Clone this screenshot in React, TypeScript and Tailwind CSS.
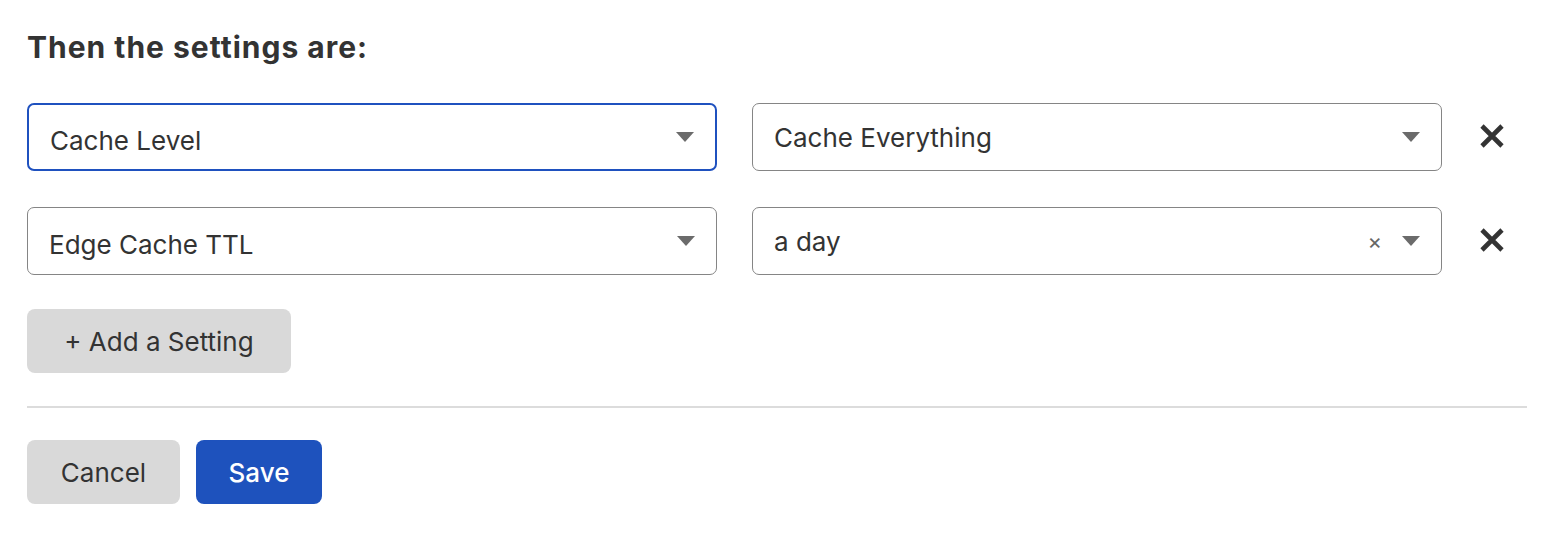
function Caret() {
  return (
    <svg width="18" height="10" viewBox="0 0 18 10" className="shrink-0">
      <path d="M0 0h18L9 10z" fill="#6b6b6b" />
    </svg>
  );
}

function RemoveIcon() {
  return (
    <svg width="26" height="26" viewBox="0 0 26 26">
      <path d="M3 3L23 23M23 3L3 23" stroke="#333" strokeWidth="4.6" strokeLinecap="butt" />
    </svg>
  );
}

function Select({
  value,
  focused,
  clearable,
  offset,
}: {
  value: string;
  focused?: boolean;
  clearable?: boolean;
  offset?: boolean;
}) {
  return (
    <div
      className={`flex h-[68px] w-[690px] items-center rounded-[7px] bg-white pl-[21px] pr-[21px] ${
        focused ? "border-2 border-[#1f51bf]" : "border border-[#858585]"
      }`}
    >
      <span className={`flex-1 text-[26px] text-[#333] ${offset ? "pt-[6px]" : "pt-0"}`}>{value}</span>
      {clearable && <span className="mr-[20px] text-[22px] leading-none text-[#666]">×</span>}
      <Caret />
    </div>
  );
}

function Row({ left, right, clearable }: { left: string; right: string; clearable?: boolean }) {
  return (
    <div className="flex items-center">
      <Select value={left} focused={left === "Cache Level"} offset />
      <div className="ml-[35px]">
        <Select value={right} clearable={clearable} />
      </div>
      <button className="ml-[37px] pb-[2px]">
        <RemoveIcon />
      </button>
    </div>
  );
}

export default function App() {
  return (
    <div
      className="bg-white px-[27px] pt-[24px] text-[#333]"
      style={{ fontFamily: "Inter, 'Open Sans', sans-serif" }}
    >
      <h2 className="text-[30px] font-bold leading-[46px] tracking-[1px] text-[#333]">Then the settings are:</h2>

      <div className="mt-[33px] flex flex-col gap-[36px]">
        <Row left="Cache Level" right="Cache Everything" />
        <Row left="Edge Cache TTL" right="a day" clearable />
      </div>

      <button className="mt-[34px] h-[64px] w-[264px] rounded-[8px] bg-[#d9d9d9] text-[26px] text-[#333]">
        + Add a Setting
      </button>

      <hr className="mt-[33px] w-[1500px] border-t-2 border-[#dcdcdc]" />

      <div className="mt-[32px] flex gap-[16px] pb-[32px]">
        <button className="h-[64px] w-[153px] rounded-[8px] bg-[#d9d9d9] text-[26px] text-[#333]">Cancel</button>
        <button className="h-[64px] w-[126px] rounded-[8px] bg-[#1e52bd] text-[26px] font-medium text-white">
          Save
        </button>
      </div>
    </div>
  );
}
